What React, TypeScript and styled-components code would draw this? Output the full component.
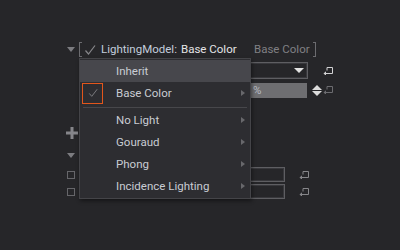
import { createGlobalStyle, styled } from "styled-components"

const GlobalStyle = createGlobalStyle`
  html, body {
    margin: 0;
    background: #262629;
  }
  body {
    font-family: Roboto, "Liberation Sans", sans-serif;
  }
`

const Page = styled.div`
  position: relative;
  width: 400px;
  height: 250px;
  box-sizing: border-box;
  padding: 41px 0 0 66px;
  display: flex;
  flex-direction: column;
  background: #262629;
  overflow: hidden;
`

const Row = styled.div<{ $top: number; $height: number }>`
  display: flex;
  align-items: center;
  margin-top: ${({ $top }) => $top}px;
  height: ${({ $height }) => $height}px;
  flex-shrink: 0;
`

const Caret = styled.span<{ $left?: number }>`
  width: 0;
  height: 0;
  margin-left: ${({ $left }) => $left ?? 1}px;
  border-left: 4px solid transparent;
  border-right: 4px solid transparent;
  border-top: 5px solid #7c7c80;
`

const Bracket = styled.span<{ $side: "left" | "right" }>`
  width: 3px;
  height: 15px;
  flex-shrink: 0;
  box-sizing: border-box;
  border: 1px solid #6c6c70;
  ${({ $side }) => ($side === "left" ? "border-right: none;" : "border-left: none;")}
  margin-left: ${({ $side }) => ($side === "left" ? 4 : 0)}px;
`

const Text = styled.span<{ $width: number; $color: string; $left?: number }>`
  width: ${({ $width }) => $width}px;
  flex-shrink: 0;
  margin-left: ${({ $left }) => $left ?? 0}px;
  color: ${({ $color }) => $color};
  font-size: 11.5px;
  white-space: nowrap;
  overflow: hidden;
  line-height: 17px;
`

const Box = styled.div<{ $left: number; $width: number; $height: number }>`
  margin-left: ${({ $left }) => $left}px;
  width: ${({ $width }) => $width}px;
  height: ${({ $height }) => $height}px;
  flex-shrink: 0;
  box-sizing: border-box;
  border: 1px solid #5e5e62;
  box-shadow: inset 0 0 0 1px #38383c;
  display: flex;
  align-items: center;
  justify-content: flex-end;
  padding-right: 3px;
`

const DropTriangle = styled.span`
  width: 0;
  height: 0;
  border-left: 5.5px solid transparent;
  border-right: 5.5px solid transparent;
  border-top: 5px solid #e2e2e2;
`

const GreyField = styled.div`
  margin-left: 104px;
  width: 137px;
  height: 15px;
  flex-shrink: 0;
  background: #6e6e71;
  color: #b8bcc4;
  font-size: 11.5px;
  line-height: 15px;
  padding-left: 83px;
  box-sizing: border-box;
`

const Spinner = styled.div`
  margin-left: 5px;
  width: 10px;
  display: flex;
  flex-direction: column;
  align-items: center;
  gap: 1px;
`

const SpinArrow = styled.span<{ $dir: "up" | "down" }>`
  width: 0;
  height: 0;
  border-left: 5px solid transparent;
  border-right: 5px solid transparent;
  ${({ $dir }) =>
    $dir === "up" ? "border-bottom: 5px solid #dcdcdc;" : "border-top: 5px solid #dcdcdc;"}
`

const IconSlot = styled.span<{ $left: number }>`
  display: flex;
  flex-shrink: 0;
  margin-left: ${({ $left }) => $left}px;
`

const Check = styled.span`
  width: 8px;
  height: 8px;
  margin-left: 1px;
  box-sizing: border-box;
  border: 1px solid #66666a;
`

const Menu = styled.div`
  position: absolute;
  left: 79px;
  top: 58px;
  width: 172px;
  box-sizing: border-box;
  padding: 1px 0;
  background: #2d2d31;
  border: 1px solid #444448;
  box-shadow: 1px 2px 4px rgba(0, 0, 0, 0.45);
  display: flex;
  flex-direction: column;
`

const Item = styled.div<{ $hover?: boolean }>`
  display: flex;
  align-items: center;
  height: 22px;
  padding: 0 5px 0 2px;
  background: ${({ $hover }) => ($hover ? "#47474c" : "transparent")};
  color: #c9ccd3;
  font-size: 11.5px;
`

const CheckSlot = styled.span<{ $checked?: boolean }>`
  width: 21px;
  height: 21px;
  box-sizing: border-box;
  border: 1px solid ${({ $checked }) => ($checked ? "#e2561c" : "transparent")};
  display: flex;
  align-items: center;
  justify-content: center;
`

const ItemLabel = styled.span`
  flex: 1;
  margin-left: 13px;
  white-space: nowrap;
`

const SubArrow = styled.span`
  width: 0;
  height: 0;
  border-top: 3.5px solid transparent;
  border-bottom: 3.5px solid transparent;
  border-left: 4px solid #68686c;
`

const Separator = styled.div`
  height: 1px;
  margin: 3px 3px 1px 3px;
  background: #47474b;
`

function ReturnIcon({ color }: { color: string }) {
  return (
    <svg width="10" height="8" viewBox="0 0 10 8" fill="none">
      <path d="M4 3.5V0.5H9.5V6.5H2" stroke={color} strokeWidth="1" />
      <path d="M0.5 6.5L3 4.2V8.8Z" fill={color} />
    </svg>
  )
}

function CheckMark({ size, color }: { size: number; color: string }) {
  return (
    <svg width={size} height={size} viewBox="0 0 12 12" fill="none">
      <path d="M1.5 6.5L4.5 10L11 1.5" stroke={color} strokeWidth="1.2" />
    </svg>
  )
}

function Plus() {
  return (
    <svg width="12" height="12" viewBox="0 0 12 12">
      <path d="M4.5 0H7.5V4.5H12V7.5H7.5V12H4.5V7.5H0V4.5H4.5Z" fill="#85858a" />
    </svg>
  )
}

const items = ["No Light", "Gouraud", "Phong", "Incidence Lighting"]

export default function App() {
  return (
    <>
      <GlobalStyle />
      <Page>
        <Row $top={0} $height={17}>
          <Caret />
          <Bracket $side="left" />
          <IconSlot $left={2}>
            <CheckMark size={12} color="#86868a" />
          </IconSlot>
          <Text $width={80} $left={5} $color="#c3cddc">
            LightingModel:
          </Text>
          <Text $width={73} $color="#e4e4e6">
            Base Color
          </Text>
          <Text $width={59} $color="#808084">
            Base Color
          </Text>
          <Bracket $side="right" />
        </Row>
        <Row $top={4} $height={17}>
          <Box $left={104} $width={138} $height={17}>
            <DropTriangle />
          </Box>
          <IconSlot $left={15}>
            <ReturnIcon color="#d2d2d4" />
          </IconSlot>
        </Row>
        <Row $top={3} $height={16}>
          <GreyField>%</GreyField>
          <Spinner>
            <SpinArrow $dir="up" />
            <SpinArrow $dir="down" />
          </Spinner>
          <IconSlot $left={1}>
            <ReturnIcon color="#6c6c70" />
          </IconSlot>
        </Row>
        <Row $top={29} $height={12}>
          <Plus />
        </Row>
        <Row $top={14} $height={5}>
          <Caret />
        </Row>
        <Row $top={9} $height={15}>
          <Check />
          <Box $left={75} $width={135} $height={15} />
          <IconSlot $left={14}>
            <ReturnIcon color="#86868a" />
          </IconSlot>
        </Row>
        <Row $top={2} $height={15}>
          <Check />
          <Box $left={75} $width={135} $height={15} />
          <IconSlot $left={14}>
            <ReturnIcon color="#86868a" />
          </IconSlot>
        </Row>

        <Menu>
          <Item $hover>
            <CheckSlot />
            <ItemLabel>Inherit</ItemLabel>
          </Item>
          <Item>
            <CheckSlot $checked>
              <CheckMark size={10} color="#7a7a7e" />
            </CheckSlot>
            <ItemLabel>Base Color</ItemLabel>
            <SubArrow />
          </Item>
          <Separator />
          {items.map((label) => (
            <Item key={label}>
              <CheckSlot />
              <ItemLabel>{label}</ItemLabel>
              <SubArrow />
            </Item>
          ))}
        </Menu>
      </Page>
    </>
  )
}
